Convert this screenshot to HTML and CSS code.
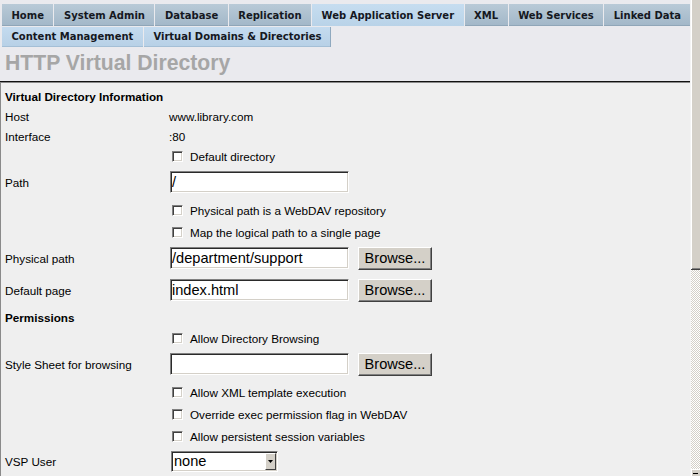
FILE: index.html
```html
<!DOCTYPE html>
<html>
<head>
<meta charset="utf-8">
<title>HTTP Virtual Directory</title>
<link rel="stylesheet" href="styles.css">
</head>
<body>
<div class="page">
  <div class="main">
    <nav class="tabs tabs-top">
      <span class="tab">Home</span>
      <span class="tab">System Admin</span>
      <span class="tab">Database</span>
      <span class="tab">Replication</span>
      <span class="tab active">Web Application Server</span>
      <span class="tab">XML</span>
      <span class="tab">Web Services</span>
      <span class="tab">Linked Data</span>
    </nav>
    <nav class="tabs tabs-sub">
      <span class="tab sub">Content Management</span>
      <span class="tab sub current">Virtual Domains &amp; Directories</span>
    </nav>
    <h1 class="title">HTTP Virtual Directory</h1>
    <div class="frame">
      <form class="form">
        <div class="cell section">Virtual Directory Information</div>

        <div class="cell lbl">Host</div>
        <div class="cell val text">www.library.com</div>

        <div class="cell lbl">Interface</div>
        <div class="cell val text">:80</div>

        <label class="cell val c2"><input type="checkbox" class="chk">Default directory</label>

        <div class="cell lbl">Path</div>
        <div class="cell val"><input type="text" class="field" value="/"></div>

        <label class="cell val c2"><input type="checkbox" class="chk">Physical path is a WebDAV repository</label>

        <label class="cell val c2"><input type="checkbox" class="chk">Map the logical path to a single page</label>

        <div class="cell lbl">Physical path</div>
        <div class="cell val"><input type="text" class="field" value="/department/support"><button type="button" class="btn">Browse...</button></div>

        <div class="cell lbl">Default page</div>
        <div class="cell val"><input type="text" class="field" value="index.html"><button type="button" class="btn">Browse...</button></div>

        <div class="cell section">Permissions</div>

        <label class="cell val c2"><input type="checkbox" class="chk">Allow Directory Browsing</label>

        <div class="cell lbl">Style Sheet for browsing</div>
        <div class="cell val"><input type="text" class="field" value=""><button type="button" class="btn">Browse...</button></div>

        <label class="cell val c2"><input type="checkbox" class="chk">Allow XML template execution</label>

        <label class="cell val c2"><input type="checkbox" class="chk">Override exec permission flag in WebDAV</label>

        <label class="cell val c2"><input type="checkbox" class="chk">Allow persistent session variables</label>

        <div class="cell lbl">VSP User</div>
        <div class="cell val">
          <div class="select"><span class="select-text">none</span><span class="select-arrow"><svg width="5" height="3" viewBox="0 0 5 3"><path d="M0 0H5L2.5 3Z" fill="#000"/></svg></span></div>
        </div>
      </form>
    </div>
  </div>
  <div class="scrollbar">
    <div class="thumb"></div>
    <div class="track"></div>
    <div class="btn-down"></div>
  </div>
</div>
</body>
</html>
```
FILE: styles.css
```css
html, body {
  margin: 0;
  padding: 0;
}
body {
  background: #eaeaee;
  font-family: "Liberation Sans", Arial, sans-serif;
  color: #000;
}
.page {
  display: flex;
  width: 700px;
  height: 476px;
  overflow: hidden;
}
.main {
  width: 690px;
  display: flex;
  flex-direction: column;
  background: #eaeaee;
}

/* tabs */
.tabs {
  display: flex;
  gap: 1px;
  padding-left: 2px;
}
.tabs-top {
  margin-top: 4px;
  height: 22px;
}
.tabs-sub {
  margin-top: 1px;
  height: 20px;
}
.tab {
  font-family: "DejaVu Sans", Verdana, sans-serif;
  font-weight: bold;
  font-size: 10px;
  color: #15181f;
  padding: 0 9.5px;
  line-height: 23px;
  white-space: nowrap;
  background: linear-gradient(#b9cad7, #a2b7c8);
  box-shadow: inset 0 -1px 0 #90a6b8;
}
.tab.active {
  background: linear-gradient(#c6ddf0, #b9d3e8);
  box-shadow: none;
}
.tab.sub {
  line-height: 19px;
  background: linear-gradient(#c4dbef, #b7d0e6);
  box-shadow: inset 0 -1px 0 #a4bfd6;
  padding: 0 9.5px;
}
.tab.current {
  box-shadow: inset -1px 0 0 #8fa9bf, inset 0 -1px 0 #a4bfd6;
}

/* title */
.title {
  margin: 0;
  height: 34px;
  padding: 4px 0 0 5px;
  box-sizing: border-box;
  font-family: "Liberation Sans", Arial, sans-serif;
  font-size: 21.2px;
  line-height: 24px;
  font-weight: bold;
  color: #a6a6a6;
}

/* content frame */
.frame {
  flex: 1;
  background: #efefef;
  border-top: 1px solid #111;
  box-shadow: inset 0 1px 0 #8a8a8a, inset 1px 0 0 #8a8a8a;
  padding: 4px 0 0 5px;
}
.form {
  display: grid;
  grid-template-columns: 165px 1fr;
  grid-template-rows: 20px 20px 20px 26px 28px 22px 26px 32px 27px 21px 26px 28px 22px 22px 25px 25px;
  align-items: start;
  font-size: 11.7px;
}
.cell {
  height: 20px;
  display: flex;
  align-items: center;
  white-space: nowrap;
}
.section {
  grid-column: 1 / span 2;
  font-weight: bold;
}
.c2 {
  grid-column: 2;
}
.text {
  margin-left: -1px;
}

/* checkbox */
.chk {
  appearance: none;
  -webkit-appearance: none;
  box-sizing: border-box;
  width: 11px;
  height: 11px;
  margin: 0 7px 0 2px;
  background: #fff;
  border: 1px solid;
  border-color: #808080 #ffffff #ffffff #808080;
  box-shadow: inset 1px 1px 0 #404040, inset -1px -1px 0 #d4d0c8;
  flex: none;
}

/* text inputs */
.field {
  box-sizing: border-box;
  width: 179px;
  height: 22px;
  margin: 0;
  padding: 0 1px;
  font-family: "Liberation Sans", Arial, sans-serif;
  font-size: 14.6px;
  color: #000;
  background: #fff;
  border: 1px solid;
  border-color: #808080 #ffffff #ffffff #808080;
  box-shadow: inset 1px 1px 0 #2a2a2a, inset -1px -1px 0 #d4d0c8;
  outline: none;
  flex: none;
}

/* buttons */
.btn {
  box-sizing: border-box;
  width: 74px;
  height: 23px;
  margin: 0 0 0 9px;
  padding: 0;
  font-family: "Liberation Sans", Arial, sans-serif;
  font-size: 14.6px;
  color: #000;
  background: #d4d0c8;
  border: 1px solid;
  border-color: #ffffff #404040 #404040 #ffffff;
  box-shadow: inset -1px -1px 0 #808080;
  flex: none;
}

/* select */
.select {
  box-sizing: border-box;
  width: 107px;
  height: 21px;
  margin-left: 1px;
  display: flex;
  align-items: stretch;
  background: #fff;
  border: 1px solid;
  border-color: #808080 #ffffff #ffffff #808080;
  box-shadow: inset 1px 1px 0 #2a2a2a, inset -1px -1px 0 #d4d0c8;
  padding: 1px 1px 1px 2px;
}
.select-text {
  flex: 1;
  font-size: 14.6px;
  line-height: 17px;
}
.select-arrow {
  width: 11px;
  display: flex;
  align-items: center;
  justify-content: center;
  background: #d4d0c8;
  box-sizing: border-box;
  border: 1px solid;
  border-color: #ffffff #404040 #404040 #ffffff;
}

/* scrollbar */
.scrollbar {
  width: 10px;
  display: flex;
  flex-direction: column;
  border-left: 1px solid #f4f4f4;
  box-sizing: border-box;
}
.thumb {
  height: 269px;
  background: #d4d0c8;
  border-bottom: 1px solid #404040;
  box-shadow: inset 1px 0 0 #ffffff, inset 0 -1px 0 #808080;
}
.track {
  flex: 1;
  background-color: #ffffff;
  background-image: repeating-conic-gradient(#d4d0c8 0 25%, #ffffff 0 50%);
  background-size: 2px 2px;
}
.btn-down {
  height: 6px;
  background: #d4d0c8;
  border-top: 1px solid #ffffff;
  box-shadow: inset 1px 0 0 #ffffff;
  position: relative;
}
.btn-down::after {
  content: "";
  position: absolute;
  left: 2px;
  top: 3px;
  width: 5px;
  height: 1px;
  background: #000;
}
```
